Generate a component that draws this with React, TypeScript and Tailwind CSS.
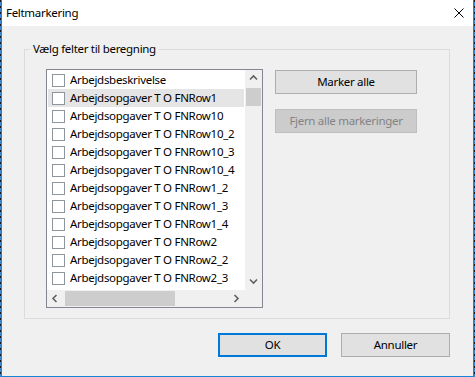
import React from "react";

const items = [
  "Arbejdsbeskrivelse",
  "Arbejdsopgaver T O FNRow1",
  "Arbejdsopgaver T O FNRow10",
  "Arbejdsopgaver T O FNRow10_2",
  "Arbejdsopgaver T O FNRow10_3",
  "Arbejdsopgaver T O FNRow10_4",
  "Arbejdsopgaver T O FNRow1_2",
  "Arbejdsopgaver T O FNRow1_3",
  "Arbejdsopgaver T O FNRow1_4",
  "Arbejdsopgaver T O FNRow2",
  "Arbejdsopgaver T O FNRow2_2",
  "Arbejdsopgaver T O FNRow2_3",
  "Arbejdsopgaver T O FNRow2_4",
];

function Chevron({ dir }: { dir: "up" | "down" | "left" | "right" }) {
  const paths: Record<string, string> = {
    up: "M1 5.5 L4.5 2 L8 5.5",
    down: "M1 2.5 L4.5 6 L8 2.5",
    left: "M5.5 1 L2 4.5 L5.5 8",
    right: "M2.5 1 L6 4.5 L2.5 8",
  };
  return (
    <svg width="9" height="9" viewBox="0 0 9 9">
      <path d={paths[dir]} fill="none" stroke="#606060" strokeWidth="1.6" />
    </svg>
  );
}

export default function App() {
  const font = { fontFamily: '"Noto Sans", "Liberation Sans", sans-serif' };
  return (
    <div className="w-[475px] h-[377px] flex text-[11.5px] tracking-[-0.3px] text-black" style={font}>
      <div className="w-[1px] h-full bg-[repeating-linear-gradient(to_bottom,#1a1a1a_0px,#1a1a1a_2px,#3d86d0_2px,#3d86d0_6px)]" />
      <div className="w-[473px] h-full flex flex-col border-x border-b border-[#1883d7] bg-[#f0f0f0]">
        <div className="h-[26px] bg-white flex items-center pl-[4px] pr-[9px]">
          <span className="flex-1 leading-[16px]">Feltmarkering</span>
          <svg width="10" height="10" viewBox="0 0 10 10">
            <path d="M0.5 0.5 L9.5 9.5 M9.5 0.5 L0.5 9.5" stroke="#000" strokeWidth="1" />
          </svg>
        </div>
        <div className="flex-1 flex flex-col pt-[15px] pl-[22px] pr-[23px]">
          <fieldset className="border border-[#dcdcdc] h-[278px]">
            <legend className="ml-[5px] px-[3px] leading-[16px]">Vælg felter til beregning</legend>
            <div className="flex pl-[21px] mt-[12px]">
              <div className="w-[217px] h-[239px] border border-[#828790] bg-white grid grid-cols-[1fr_17px] grid-rows-[1fr_17px]">
                <div className="overflow-hidden p-[1px]">
                  {items.map((t, i) => (
                    <div
                      key={t}
                      className={`h-[18px] flex items-center whitespace-nowrap ${i === 1 ? "bg-[#e5e5e5]" : ""}`}
                    >
                      <div className="ml-[4px] w-[13px] h-[13px] border border-[#8f959c] bg-white shrink-0" />
                      <span className="ml-[5px] leading-[16px]">{t}</span>
                    </div>
                  ))}
                </div>
                <div className="bg-[#f0f0f0] flex flex-col">
                  <div className="h-[17px] flex items-center justify-center">
                    <Chevron dir="up" />
                  </div>
                  <div className="mt-[1px] mx-auto w-[15px] h-[18px] bg-[#cdcdcd]" />
                  <div className="flex-1" />
                  <div className="h-[17px] flex items-center justify-center">
                    <Chevron dir="down" />
                  </div>
                </div>
                <div className="bg-[#f0f0f0] flex items-center">
                  <div className="w-[17px] h-[17px] flex items-center justify-center">
                    <Chevron dir="left" />
                  </div>
                  <div className="ml-[1px] w-[110px] h-[15px] bg-[#cdcdcd]" />
                  <div className="flex-1" />
                  <div className="w-[17px] h-[17px] flex items-center justify-center">
                    <Chevron dir="right" />
                  </div>
                </div>
                <div className="bg-[#f0f0f0]" />
              </div>
              <div className="ml-[12px] mt-[1px] flex flex-col gap-[15px]">
                <button className="w-[142px] h-[24px] bg-[#e1e1e1] border border-[#adadad] flex items-center justify-center leading-[16px]">
                  Marker alle
                </button>
                <button className="w-[142px] h-[24px] bg-[#cccccc] border border-[#bfbfbf] text-[#838383] flex items-center justify-center leading-[16px]">
                  Fjern alle markeringer
                </button>
              </div>
            </div>
          </fieldset>
          <div className="mt-[14px] flex justify-end gap-[14px]">
            <button className="w-[109px] h-[24px] bg-[#e1e1e1] border-2 border-[#0078d7] flex items-center justify-center leading-[16px]">
              OK
            </button>
            <button className="w-[109px] h-[24px] bg-[#e1e1e1] border border-[#adadad] flex items-center justify-center leading-[16px]">
              Annuller
            </button>
          </div>
        </div>
      </div>
      <div className="w-[1px] h-full bg-[repeating-linear-gradient(to_bottom,#1a1a1a_0px,#1a1a1a_2px,#3d86d0_2px,#3d86d0_6px)]" />
    </div>
  );
}
